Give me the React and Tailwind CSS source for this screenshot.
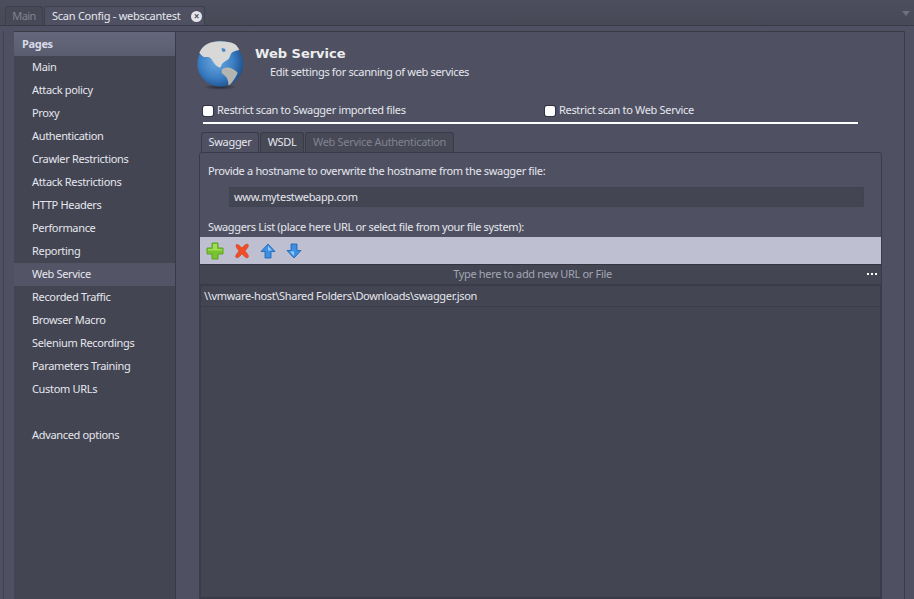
const pages = [
  "Main",
  "Attack policy",
  "Proxy",
  "Authentication",
  "Crawler Restrictions",
  "Attack Restrictions",
  "HTTP Headers",
  "Performance",
  "Reporting",
  "Web Service",
  "Recorded Traffic",
  "Browser Macro",
  "Selenium Recordings",
  "Parameters Training",
  "Custom URLs",
];

function Globe() {
  return (
    <svg width="52" height="52" viewBox="0 0 52 52" className="shrink-0">
      <defs>
        <radialGradient id="sea" cx="42%" cy="45%" r="62%">
          <stop offset="0%" stopColor="#6aa9e0" />
          <stop offset="60%" stopColor="#3a7dc2" />
          <stop offset="100%" stopColor="#1b4d88" />
        </radialGradient>
        <radialGradient id="shadow" cx="50%" cy="50%" r="50%">
          <stop offset="0%" stopColor="#1c1e26" stopOpacity="0.8" />
          <stop offset="100%" stopColor="#1c1e26" stopOpacity="0" />
        </radialGradient>
      </defs>
      <ellipse cx="25" cy="48" rx="17" ry="3" fill="url(#shadow)" />
      <circle cx="25.3" cy="24.7" r="23" fill="url(#sea)" />
      <path
        d="M4.3 13.7 C6.5 9.5 8.5 7 11.7 5.3 C16 3 20 2.3 25 2.3 C31 2.5 36 3 40 5.3 C42 7 43.5 9 44.3 11 C41 11.5 39 12 36.7 13.7 C35 16 35 18.5 33.3 20.3 C31 22 28.5 23 26.7 25.3 C26.5 27 26 28 25 28.7 C23 28 21.5 27 20 25.3 C18 23 17 20 15 18.7 C12.5 17.5 10.5 18.5 8.3 17.7 C6.5 16.5 5.5 15 4.3 13.7 Z"
        fill="#d8d9d6"
      />
      <path d="M26.5 9.5 C29 8.5 31 10 30.5 12 C29 14 26.5 13 26.5 9.5 Z" fill="#4a88c8" />
      <path d="M26.7 30.3 C29.5 28.5 32 28 35 28.7 C38 30 41 31.5 42.7 33.7 C41 37.5 39 41 36.7 43.7 C35.5 45 34.5 46 33.3 46.3 C33.5 43 33 41 31.7 38.7 C30 36.5 28 35.5 26.7 33.7 Z" fill="#b4b5b0" />
    </svg>
  );
}

function PlusIcon() {
  return (
    <svg width="18" height="18" viewBox="0 0 18 18">
      <path
        d="M6 1 H12 V6 H17 V12 H12 V17 H6 V12 H1 V6 H6 Z"
        fill="#78c32f"
        stroke="#5aa420"
        strokeWidth="1"
      />
      <path d="M7 2 H11 V7 H16 V8.5 H2 V7 H7 Z" fill="#a2dc58" />
    </svg>
  );
}

function CrossIcon() {
  return (
    <svg width="16" height="16" viewBox="0 0 16 16">
      <path
        d="M2.5 1.5 C4 1 6 3 8 5 C10 2.5 12 0.5 14 1.5 C15.5 3 12.5 6 11 8 C12.5 10 15.5 12.5 14 14.5 C12 15.5 10 13 8 11 C6 13 4 15.5 2 14.5 C0.5 13 3.5 10 5 8 C3.5 6 1 3.5 2.5 1.5 Z"
        fill="#ee4d28"
        stroke="#d43c1c"
        strokeWidth="0.6"
      />
    </svg>
  );
}

function ArrowIcon({ down }) {
  return (
    <svg width="16" height="16" viewBox="0 0 16 16" className={down ? "rotate-180" : ""}>
      <path
        d="M8 1 L15 8.5 H11 V15 H5 V8.5 H1 Z"
        fill="#3b8fe4"
        stroke="#1b5fae"
        strokeWidth="0.8"
      />
      <path d="M8 3 L12 7.5 H8 Z" fill="#9ccbf5" />
    </svg>
  );
}

function Check({ label }) {
  return (
    <label className="flex items-center gap-[4px]">
      <span className="h-[10px] w-[10px] rounded-[2px] bg-white ring-1 ring-[#33343f]" />
      <span>{label}</span>
    </label>
  );
}

export default function App() {
  return (
    <div className="flex h-[599px] w-[914px] flex-col overflow-hidden bg-[#4f5162] font-['Noto_Sans','Liberation_Sans',sans-serif] text-[11px] tracking-[-0.33px] text-[#e6e7ee]">
      <div className="relative flex h-[26px] shrink-0 items-end border-b border-[#393a47] bg-gradient-to-b from-[#4c4e5e] to-[#474957] pl-[5px]">
        <div className="flex h-[19px] w-[38px] items-center justify-center rounded-t-[3px] border border-b-0 border-[#3e3f4c] bg-[#474957] tracking-[-0.6px] text-[#81838f]">
          Main
        </div>
        <div className="ml-[1px] flex h-[19px] w-[161px] items-center rounded-t-[3px] border border-b-0 border-[#3e3f4c] bg-[#4f5162] pl-[7px] tracking-[-0.25px]">
          Scan Config - webscantest
          <span className="ml-auto mr-[2px] flex h-[11px] w-[11px] items-center justify-center rounded-full bg-[#e4e5ea] text-[10px] font-bold leading-none text-[#4f5162]">
            ×
          </span>
        </div>
        <span className="absolute right-[4px] top-[11px] h-0 w-0 border-x-[4px] border-t-[5px] border-x-transparent border-t-[#6e7081]" />
      </div>

      <div className="flex min-h-0 flex-1 pl-[3px] pr-[9px] pt-[5px]">
        <div className="flex flex-1 border-l border-[#424351] pl-[10px]">
          <div className="flex flex-1 border-r border-t border-[#3a3b48]">
            <aside className="w-[162px] shrink-0 border-r border-[#393a47] bg-[#434552]">
              <div className="flex h-[24px] items-center bg-gradient-to-b from-[#65687c] to-[#5a5c6e] pl-[8px] pt-[1px] font-bold text-[#d9dbe8]">
                Pages
              </div>
              {pages.map((p) => (
                <div
                  key={p}
                  className={`flex h-[23px] items-center pl-[18px] ${p === "Web Service" ? "bg-[#535566]" : ""}`}
                >
                  {p}
                </div>
              ))}
              <div className="mt-[23px] flex h-[23px] items-center pl-[18px]">Advanced options</div>
            </aside>

            <main className="flex min-w-0 flex-1 flex-col pl-[19px] pt-[7px]">
              <div className="flex h-[52px] gap-[8px]">
                <Globe />
                <div className="pt-[6px]">
                  <div className="font-['DejaVu_Sans',sans-serif] text-[13px] font-bold leading-[18px] tracking-normal text-[#eceded]">
                    Web Service
                  </div>
                  <div className="ml-[15px] mt-[1px]">Edit settings for scanning of web services</div>
                </div>
              </div>

              <div className="ml-[8px] mt-[11px] w-[655px] border-b-2 border-white pb-[3px]">
                <div className="flex h-[17px] items-center">
                  <div className="w-[342px]">
                    <Check label="Restrict scan to Swagger imported files" />
                  </div>
                  <Check label="Restrict scan to Web Service" />
                </div>
              </div>

              <div className="ml-[6px] mt-[8px] flex h-[20px] items-end gap-[1px]">
                <div className="flex h-[20px] w-[58px] items-center justify-center rounded-t-[3px] border border-b-0 border-[#3a3b48] bg-[#4f5162]">
                  Swagger
                </div>
                <div className="flex h-[20px] w-[44px] items-center justify-center rounded-t-[3px] border border-b-0 border-[#3a3b48] bg-[#474957]">
                  WSDL
                </div>
                <div className="flex h-[20px] w-[149px] items-center justify-center rounded-t-[3px] border border-b-0 border-[#3a3b48] bg-[#474957] text-[#81838f]">
                  Web Service Authentication
                </div>
              </div>

              <div className="ml-[4px] flex w-[683px] flex-1 flex-col rounded-t-[3px] border border-[#3a3b48]">
                <div className="ml-[8px] mt-[10px] leading-[16px]">
                  Provide a hostname to overwrite the hostname from the swagger file:
                </div>
                <div className="ml-[29px] mt-[8px] flex h-[20px] w-[635px] items-center border border-[#424351] bg-[#434552] pl-[4px]">
                  www.mytestwebapp.com
                </div>
                <div className="ml-[8px] mt-[12px] leading-[16px]">
                  Swaggers List (place here URL or select file from your file system):
                </div>
                <div className="mt-[2px] flex h-[28px] items-center gap-[10px] border-b border-[#33343f] bg-[#bec0d2] pl-[6px]">
                  <PlusIcon />
                  <CrossIcon />
                  <ArrowIcon />
                  <ArrowIcon down />
                </div>
                <div className="relative flex h-[19px] items-center justify-center bg-[#434552] pr-[16px] text-[#a4a6b2]">
                  Type here to add new URL or File
                  <span className="absolute right-[4px] top-[8px] flex gap-[2px]">
                    <i className="h-[2px] w-[2px] bg-white" />
                    <i className="h-[2px] w-[2px] bg-white" />
                    <i className="h-[2px] w-[2px] bg-white" />
                  </span>
                </div>
                <div className="flex flex-1 flex-col border border-t-2 border-[#3a3b48] bg-[#434552]">
                  <div className="flex h-[21px] items-center border-b border-[#3c3d4a] pl-[3px]">
                    \\vmware-host\Shared Folders\Downloads\swagger.json
                  </div>
                </div>
              </div>
            </main>
          </div>
        </div>
      </div>
    </div>
  );
}
